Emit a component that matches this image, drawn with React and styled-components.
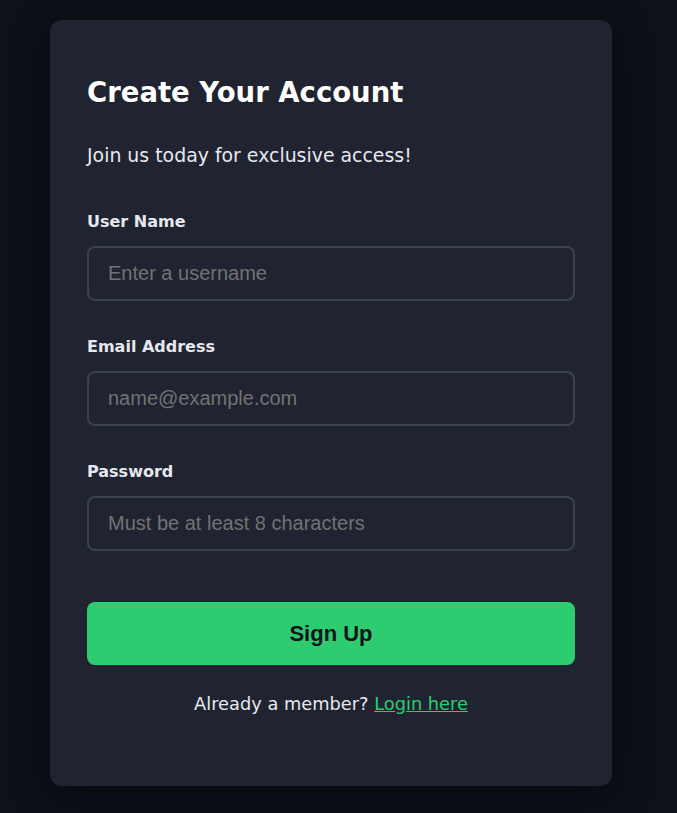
import React from 'react';
import styled, { createGlobalStyle } from 'styled-components';

const GlobalStyle = createGlobalStyle`
  html, body {
    margin: 0;
    padding: 0;
    background: #0d1118;
  }
  * {
    box-sizing: border-box;
  }
`

const Page = styled.div`
  min-height: 813px;
  padding: 20px 0 28px 50px;
  font-family: "DejaVu Sans", "Noto Sans", sans-serif;
`

const Card = styled.div`
  width: 562px;
  background: #1f2430;
  border-radius: 12px;
  padding: 54px 37px 71px;
  box-shadow: 0 10px 40px rgba(0, 0, 0, 0.45);
`

const Title = styled.h1`
  margin: 0;
  color: #ffffff;
  font-size: 27.5px;
  line-height: 36px;
  font-weight: 700;
`

const Subtitle = styled.p`
  margin: 32px 0 0;
  color: #e6e8ee;
  font-size: 18.9px;
  line-height: 26px;
`

const Form = styled.form`
  display: flex;
  flex-direction: column;
  gap: 34px;
  margin-top: 42px;
`

const Field = styled.div`
  display: flex;
  flex-direction: column;
  gap: 13px;
`

const Label = styled.label`
  margin-top: 1px;
  color: #e6e8ee;
  font-size: 16px;
  line-height: 22px;
  font-weight: 700;
`

const Input = styled.input`
  height: 55px;
  width: 100%;
  background: transparent;
  border: 2px solid #3a4150;
  border-radius: 8px;
  padding: 0 19px;
  color: #fff;
  font-family: "Liberation Sans", Arial, sans-serif;
  font-size: 20px;
  outline: none;

  &::placeholder {
    color: #727272;
  }
`

const Button = styled.button`
  margin-top: 17px;
  height: 63px;
  width: 100%;
  border: none;
  border-radius: 8px;
  background: #2ecc71;
  color: #111418;
  font-family: "Liberation Sans", Arial, sans-serif;
  font-size: 22px;
  font-weight: 700;
  cursor: pointer;
`

const Footer = styled.p`
  margin: 28px 0 0;
  text-align: center;
  color: #e6e8ee;
  font-size: 17.8px;
  line-height: 22px;
`

const LoginLink = styled.a`
  color: #2ecc71;
  text-decoration: underline;
`

const fields = [
  { id: 'username', label: 'User Name', type: 'text', placeholder: 'Enter a username' },
  { id: 'email', label: 'Email Address', type: 'email', placeholder: 'name@example.com' },
  { id: 'password', label: 'Password', type: 'password', placeholder: 'Must be at least 8 characters' },
];

const App = () => {
  return (
    <>
      <GlobalStyle />
      <Page>
        <Card>
          <Title>Create Your Account</Title>
          <Subtitle>Join us today for exclusive access!</Subtitle>
          <Form onSubmit={(e) => e.preventDefault()}>
            {fields.map((f) => (
              <Field key={f.id}>
                <Label htmlFor={f.id}>{f.label}</Label>
                <Input id={f.id} type={f.type} placeholder={f.placeholder} />
              </Field>
            ))}
            <Button type="submit">Sign Up</Button>
          </Form>
          <Footer>
            Already a member? <LoginLink href="#">Login here</LoginLink>
          </Footer>
        </Card>
      </Page>
    </>
  );
}

export default App;
